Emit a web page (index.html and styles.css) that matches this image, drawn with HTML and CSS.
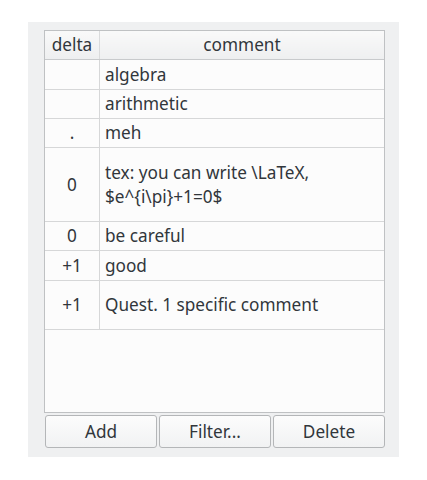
FILE: index.html
```html
<!DOCTYPE html>
<html lang="en">
<head>
    <meta charset="UTF-8">
    <meta name="viewport" content="width=device-width, initial-scale=1.0">
    <title>Comments</title>
    <link rel="stylesheet" href="styles.css">
</head>
<body>
    <div class="panel">
        <div class="table-box">
            <table class="comments">
                <thead>
                    <tr><th class="delta">delta</th><th>comment</th></tr>
                </thead>
                <tbody>
                    <tr class="r30"><td class="delta"></td><td>algebra</td></tr>
                    <tr class="r29"><td class="delta"></td><td>arithmetic</td></tr>
                    <tr class="r29"><td class="delta">.</td><td>meh</td></tr>
                    <tr class="r74"><td class="delta">0</td><td class="wrap">tex: you can write \LaTeX,<br>$e^{i\pi}+1=0$</td></tr>
                    <tr class="r29"><td class="delta">0</td><td>be careful</td></tr>
                    <tr class="r30"><td class="delta">+1</td><td>good</td></tr>
                    <tr class="r49"><td class="delta">+1</td><td>Quest. 1 specific comment</td></tr>
                </tbody>
            </table>
        </div>
        <div class="buttons">
            <button class="btn">Add</button>
            <button class="btn">Filter...</button>
            <button class="btn">Delete</button>
        </div>
    </div>
</body>
</html>
```

FILE: styles.css
```css
body { margin: 0; background: #ffffff; font-family: "Noto Sans", sans-serif; font-size: 17.2px; color: #31363b; }
.panel { margin: 22px 0 0 28px; width: 371px; height: 435px; box-sizing: border-box; padding: 8px 14px 9px 16px; background: #eff0f1; display: flex; flex-direction: column; }
.table-box { height: 383px; box-sizing: border-box; border: 1px solid #bfc1c3; background: #fcfcfc; }
.comments { width: 100%; border-collapse: collapse; line-height: 22px; }
.comments th { height: 28px; padding: 0; font-weight: normal; border-bottom: 1px solid #c8cacc; border-left: 1px solid #dadbdc; background: linear-gradient(#f9f9f9, #eeeff0); text-align: center; }
.comments th:first-child, .comments td:first-child { border-left: none; }
.comments td { padding: 0 0 0 5px; border-top: 1px solid #d6d7d8; border-left: 1px solid #d6d7d8; }
.comments tbody tr:first-child td { border-top: none; }
.comments tr:last-child td { border-bottom: 1px solid #d6d7d8; }
.comments .delta { width: 54px; padding: 0; text-align: center; }
.r29 td { height: 28px; }
.r30 td { height: 29px; }
.r49 td { height: 48px; }
.r74 td { height: 73px; }
.wrap { line-height: 24px; }
.buttons { display: flex; gap: 2px; margin-top: 2px; padding-left: 1px; }
.btn { flex: 1; height: 33px; font: inherit; color: #31363b; border: 1px solid #b4b6b8; border-radius: 3px; background: linear-gradient(#fcfcfc, #f1f2f3); }
```
